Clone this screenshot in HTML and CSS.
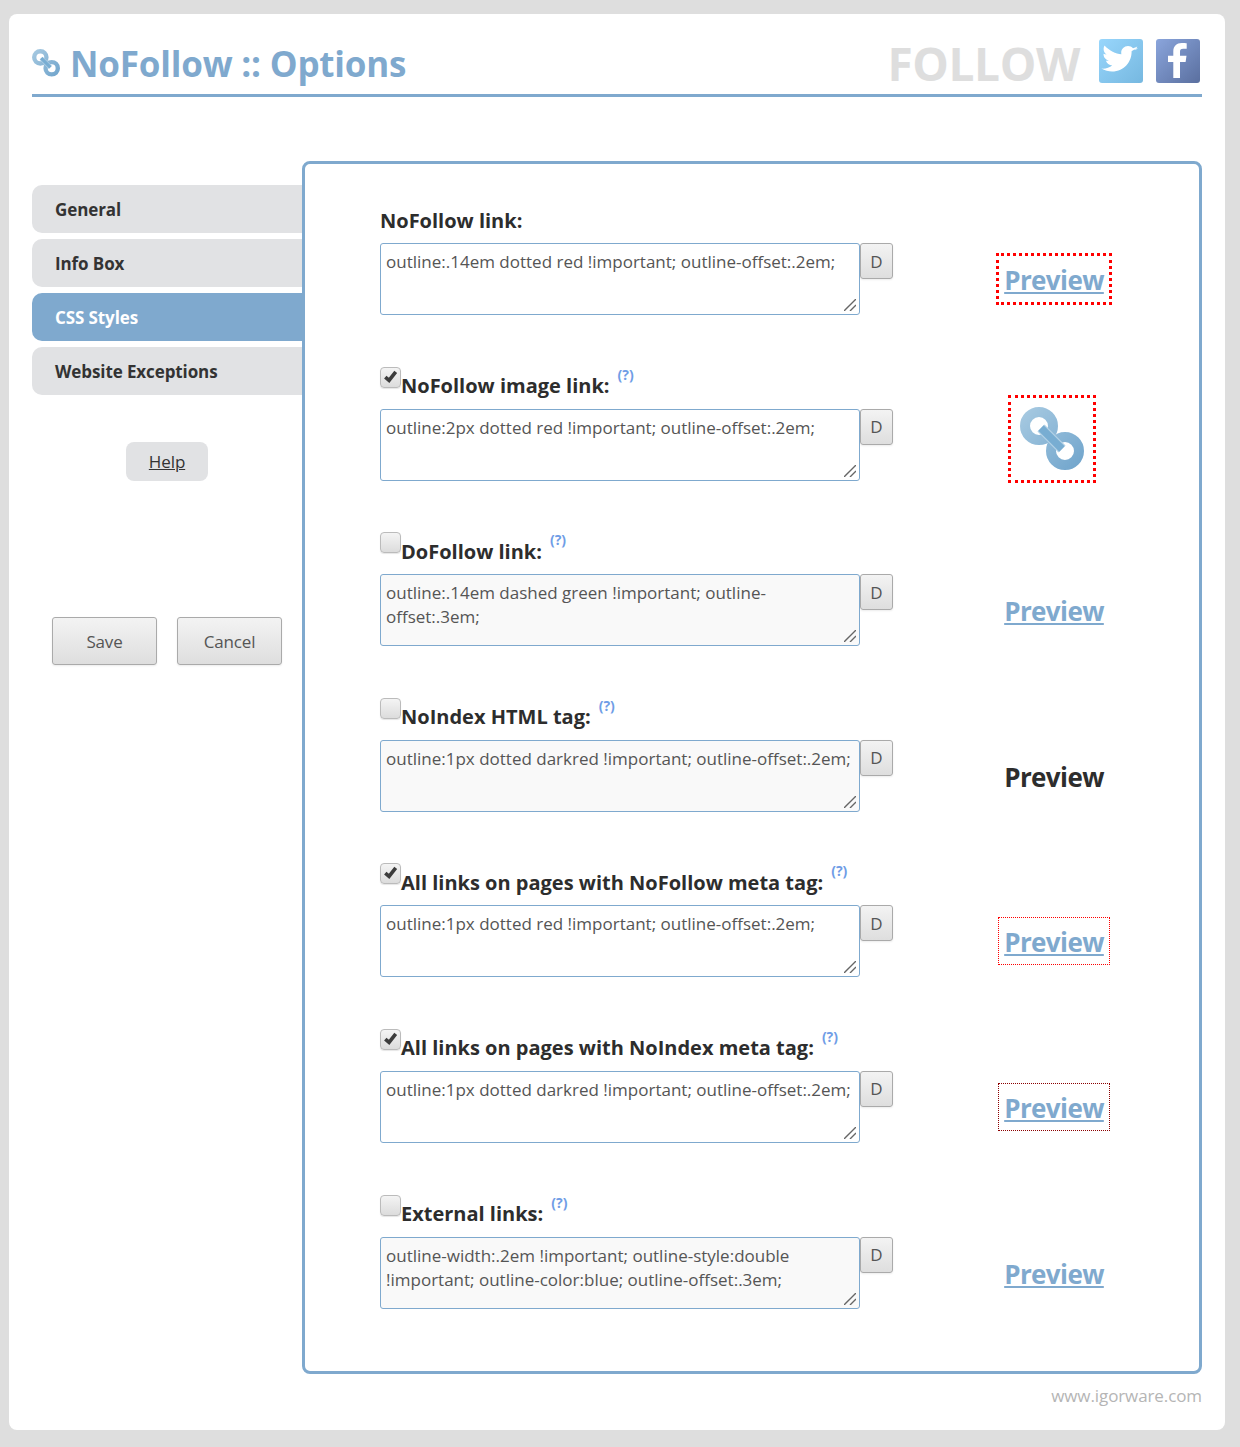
FILE: index.html
```html
<!DOCTYPE html>
<html lang="en">
<head>
<meta charset="utf-8">
<title>NoFollow :: Options</title>
<link rel="stylesheet" href="styles.css">
</head>
<body>
<svg class="defs" width="0" height="0" aria-hidden="true">
  <defs>
    <linearGradient id="chain" gradientUnits="userSpaceOnUse" x1="0" y1="0" x2="64" y2="64">
      <stop offset="0" stop-color="#a9cbe2"/><stop offset="1" stop-color="#6ea3cb"/>
    </linearGradient>
    <linearGradient id="tw" x1="0" y1="0" x2="1" y2="1">
      <stop offset="0" stop-color="#98d6fc"/><stop offset="1" stop-color="#76b8e0"/>
    </linearGradient>
    <linearGradient id="fb" x1="0" y1="0" x2="1" y2="1">
      <stop offset="0" stop-color="#8aa5dc"/><stop offset="1" stop-color="#5a6f9f"/>
    </linearGradient>
    <symbol id="link-icon" viewBox="0 0 64 64">
      <circle cx="19" cy="19" r="14" fill="none" stroke="url(#chain)" stroke-width="10"/>
      <circle cx="45" cy="44" r="14" fill="none" stroke="url(#chain)" stroke-width="10"/>
      <path d="M21 21 L42 42" fill="none" stroke="#b3d1e6" stroke-width="10"/>
      <path d="M21 21 L42 42" fill="none" stroke="#78add2" stroke-width="7.500"/>
    </symbol>
    <symbol id="grip" viewBox="0 0 12 12">
      <path d="M0 12 L12 0 M6 12 L12 6" fill="none" stroke="#666" stroke-width="1.400"/>
    </symbol>
    <symbol id="check" viewBox="0 0 20 20">
      <path d="M4.500 9.500 L8.500 13 L15.500 4" fill="none" stroke="#3c3c3c" stroke-width="3.800"/>
    </symbol>
  </defs>
</svg>
<div class="card">
  <header class="top">
    <h1 class="title"><svg class="title-icon"><use href="#link-icon"/></svg>NoFollow :: Options</h1>
    <div class="follow">
      <span class="follow-text">FOLLOW</span>
      <svg class="social" viewBox="0 0 44 44">
        <rect width="44" height="44" rx="3" fill="url(#tw)"/>
        <path d="M39 9.500c-1.300.800-2.800 1.300-3.600 1.500 1.300-.700 2.400-2 2.900-3.400-1.300.700-2.700 1.300-4.300 1.600-1.300-1.400-3-2.200-5-2.200-3.800 0-6.800 3-6.800 6.700 0 .500.100 1 .200 1.500C16.600 15 10.600 12 5.500 6.600c-.600 1-.900 2.200-.900 3.400 0 2.400 1.200 4.400 3 5.600-1.100 0-2.200-.300-3.100-.800v.100c0 3.300 2.300 6 5.400 6.600-1 .300-2.300.300-3 .200.800 2.700 3.300 4.600 6.300 4.700-2.800 2.100-6.800 3.700-10.800 3.200 3 2 7.600 3 10.600 3 12.700 0 19.600-10.400 19.600-19.500v-.900c1.300-.900 3.700-1.800 4.400-2.700z" fill="#fff"/>
      </svg>
      <svg class="social" viewBox="0 0 44 44">
        <rect width="44" height="44" rx="3" fill="url(#fb)"/>
        <path d="M24 39V23h5.600l.900-6.300H24v-4c0-1.800.600-3 3.200-3h3.500V4.200c-.600-.100-2.700-.300-5-.300-5 0-8.400 3-8.400 8.500v4.300H12V23h5.300v16z" fill="#fff"/>
      </svg>
    </div>
  </header>

  <div class="layout">
    <aside class="side">
      <nav class="tabs">
        <a class="tab">General</a>
        <a class="tab">Info Box</a>
        <a class="tab active">CSS Styles</a>
        <a class="tab">Website Exceptions</a>
      </nav>
      <div class="help-wrap"><a class="help">Help</a></div>
      <div class="actions">
        <button class="btn">Save</button>
        <button class="btn">Cancel</button>
      </div>
    </aside>

    <main class="panel">
      <section class="row">
        <div class="editor">
          <div class="label"><span class="label-text">NoFollow link:</span></div>
          <div class="field">
            <div class="area"><textarea class="css" spellcheck="false">outline:.14em dotted red !important; outline-offset:.2em;</textarea><svg class="grip"><use href="#grip"/></svg></div>
            <button class="d">D</button>
          </div>
        </div>
        <div class="demo"><a class="pv nofollow">Preview</a></div>
      </section>

      <section class="row">
        <div class="editor">
          <div class="label"><span class="cb"><svg><use href="#check"/></svg></span><span class="label-text">NoFollow image link:</span><sup class="q">(?)</sup></div>
          <div class="field">
            <div class="area"><textarea class="css" spellcheck="false">outline:2px dotted red !important; outline-offset:.2em;</textarea><svg class="grip"><use href="#grip"/></svg></div>
            <button class="d">D</button>
          </div>
        </div>
        <div class="demo"><span class="img-box"><svg class="big-icon"><use href="#link-icon"/></svg></span></div>
      </section>

      <section class="row">
        <div class="editor">
          <div class="label"><span class="cb"></span><span class="label-text">DoFollow link:</span><sup class="q">(?)</sup></div>
          <div class="field">
            <div class="area"><textarea class="css off" spellcheck="false">outline:.14em dashed green !important; outline-offset:.3em;</textarea><svg class="grip"><use href="#grip"/></svg></div>
            <button class="d">D</button>
          </div>
        </div>
        <div class="demo"><a class="pv">Preview</a></div>
      </section>

      <section class="row">
        <div class="editor">
          <div class="label"><span class="cb"></span><span class="label-text">NoIndex HTML tag:</span><sup class="q">(?)</sup></div>
          <div class="field">
            <div class="area"><textarea class="css off" spellcheck="false">outline:1px dotted darkred !important; outline-offset:.2em;</textarea><svg class="grip"><use href="#grip"/></svg></div>
            <button class="d">D</button>
          </div>
        </div>
        <div class="demo"><span class="pv plain">Preview</span></div>
      </section>

      <section class="row">
        <div class="editor">
          <div class="label"><span class="cb"><svg><use href="#check"/></svg></span><span class="label-text">All links on pages with NoFollow meta tag:</span><sup class="q">(?)</sup></div>
          <div class="field">
            <div class="area"><textarea class="css" spellcheck="false">outline:1px dotted red !important; outline-offset:.2em;</textarea><svg class="grip"><use href="#grip"/></svg></div>
            <button class="d">D</button>
          </div>
        </div>
        <div class="demo"><a class="pv meta-red">Preview</a></div>
      </section>

      <section class="row">
        <div class="editor">
          <div class="label"><span class="cb"><svg><use href="#check"/></svg></span><span class="label-text">All links on pages with NoIndex meta tag:</span><sup class="q">(?)</sup></div>
          <div class="field">
            <div class="area"><textarea class="css" spellcheck="false">outline:1px dotted darkred !important; outline-offset:.2em;</textarea><svg class="grip"><use href="#grip"/></svg></div>
            <button class="d">D</button>
          </div>
        </div>
        <div class="demo"><a class="pv meta-dark">Preview</a></div>
      </section>

      <section class="row">
        <div class="editor">
          <div class="label"><span class="cb"></span><span class="label-text">External links:</span><sup class="q">(?)</sup></div>
          <div class="field">
            <div class="area"><textarea class="css off" spellcheck="false">outline-width:.2em !important; outline-style:double !important; outline-color:blue; outline-offset:.3em;</textarea><svg class="grip"><use href="#grip"/></svg></div>
            <button class="d">D</button>
          </div>
        </div>
        <div class="demo"><a class="pv">Preview</a></div>
      </section>
    </main>
  </div>
  <footer class="foot">www.igorware.com</footer>
</div>
</body>
</html>
```
FILE: styles.css
```css
* { box-sizing: border-box; }
html, body { margin: 0; }
body {
  background: #dedede;
  height: 1447px;
  padding: 14px 15px 17px 9px;
  font-family: "Open Sans", "Noto Sans", sans-serif;
  color: #333;
  overflow: hidden;
}
.defs { position: absolute; }
.card {
  background: #fff;
  border-radius: 8px;
  height: 1416px;
  padding: 20px 23px 0;
}
.top {
  display: flex;
  justify-content: space-between;
  height: 63px;
  border-bottom: 3px solid #7fa9ce;
}
.title {
  display: flex;
  align-items: center;
  margin: 0;
  height: 58px;
  font-size: 35px;
  font-weight: 700;
  letter-spacing: -0.2px;
  color: #7fa9ce;
}
.title-icon { width: 28px; height: 28px; margin: -1px 10px 0 0; filter: blur(.4px); }
.follow { display: flex; align-items: flex-start; padding-top: 5px; padding-right: 2px; }
.follow-text {
  font-size: 46px;
  font-weight: 700;
  line-height: 48px;
  color: #dedede;
  letter-spacing: -0.4px;
  margin-right: 19px;
}
.social { width: 44px; height: 44px; margin-left: 13px; filter: blur(.4px); }
.social:first-of-type { margin-left: 0; }
.layout { display: flex; margin-top: 64px; }
.side { width: 270px; flex: none; padding-top: 24px; position: relative; z-index: 1; }
.tabs { display: flex; flex-direction: column; gap: 6px; }
.tab {
  display: block;
  height: 48px;
  line-height: 50px;
  padding-left: 23px;
  background: #e1e2e4;
  border-radius: 10px 0 0 10px;
  font-size: 17px;
  font-weight: 700;
  letter-spacing: -0.1px;
  color: #333;
}
.tab.active { background: #7fa9ce; color: #fff; margin-right: -2px; }
.help-wrap { display: flex; justify-content: center; margin-top: 47px; }
.help {
  display: block;
  width: 82px;
  height: 39px;
  line-height: 40px;
  text-align: center;
  background: #e1e2e4;
  border-radius: 8px;
  font-size: 17px;
  color: #333;
  text-decoration: underline;
  letter-spacing: -0.1px;
}
.actions { display: flex; justify-content: center; gap: 20px; margin-top: 136px; }
.btn {
  width: 105px;
  height: 48px;
  border: 1px solid #aaa;
  border-radius: 3px;
  background: linear-gradient(#f3f3f3, #dedede);
  box-shadow: 0 1px 2px rgba(0,0,0,.08);
  font: 17px "Open Sans", "Noto Sans", sans-serif;
  letter-spacing: -0.15px;
  color: #555;
  padding: 0;
}
.panel {
  flex: 1;
  height: 1213px;
  border: 3px solid #7fa9ce;
  border-radius: 8px;
  padding: 36px 0 0 75px;
  display: grid;
  grid-auto-rows: 165.6px;
}
.row { display: flex; }
.editor { width: 513px; flex: none; }
.label {
  display: flex;
  align-items: flex-start;
  height: 38px;
  font-size: 20px;
  font-weight: 700;
  letter-spacing: 0;
  color: #2d2d2d;
}
.label-text { line-height: 28px; margin-top: 6.5px; }
.cb {
  display: block;
  width: 21px;
  height: 21px;
  margin-top: 1px;
  border: 1px solid #bbb;
  border-radius: 4px;
  background: linear-gradient(#f4f4f4, #dcdcdc);
  box-shadow: 0 1px 1px rgba(0,0,0,.1);
  flex: none;
}
.cb svg { display: block; width: 19px; height: 19px; }
.q {
  font-size: 14px;
  font-weight: 700;
  line-height: 18px;
  color: #6f9de6;
  margin: 0 0 0 8px;
  letter-spacing: 0;
}
.field { display: flex; align-items: flex-start; margin-top: 5px; }
.area { position: relative; width: 480px; height: 72px; flex: none; }
.css {
  display: block;
  width: 480px;
  height: 72px;
  margin: 0;
  padding: 6px 5px;
  border: 1px solid #7fa9ce;
  border-radius: 3px;
  background: #fff;
  font: 17px/24px "Open Sans", "Noto Sans", sans-serif;
  letter-spacing: 0;
  color: #555;
  outline: 0;
  resize: none;
}
.css.off { background: #f9f9f9; }
.grip { position: absolute; right: 4px; bottom: 4px; width: 12px; height: 12px; }
.d {
  width: 33px;
  height: 36px;
  padding: 0;
  border: 1px solid #aaa;
  border-radius: 3px;
  background: linear-gradient(#f3f3f3, #dedede);
  box-shadow: 0 1px 2px rgba(0,0,0,.08);
  font: 17px "Open Sans", "Noto Sans", sans-serif;
  color: #555;
}
.demo {
  width: 182px;
  margin-left: 70px;
  flex: none;
  display: flex;
  justify-content: center;
  align-items: flex-start;
  padding-top: 61px;
}
.pv {
  display: block;
  height: 36px;
  line-height: 38px;
  font-size: 26px;
  font-weight: 700;
  letter-spacing: -0.6px;
  color: #7fa9ce;
  text-decoration: underline;
}
.pv.plain { color: #2d2d2d; text-decoration: none; }
.nofollow { outline: 3px dotted #f00; outline-offset: 5px; }
.meta-red { outline: 1px dotted #f00; outline-offset: 5px; }
.meta-dark { outline: 1px dotted #8b0000; outline-offset: 5px; }
.img-box {
  display: block;
  width: 88px;
  height: 88px;
  margin: -32px 4px 0 0;
  border: 3px dotted #f00;
  padding: 9px;
}
.big-icon { display: block; width: 64px; height: 64px; filter: blur(.5px); }
.foot {
  margin-top: 10px;
  text-align: right;
  font-size: 17px;
  letter-spacing: -0.1px;
  color: #b5b5b5;
}
```
